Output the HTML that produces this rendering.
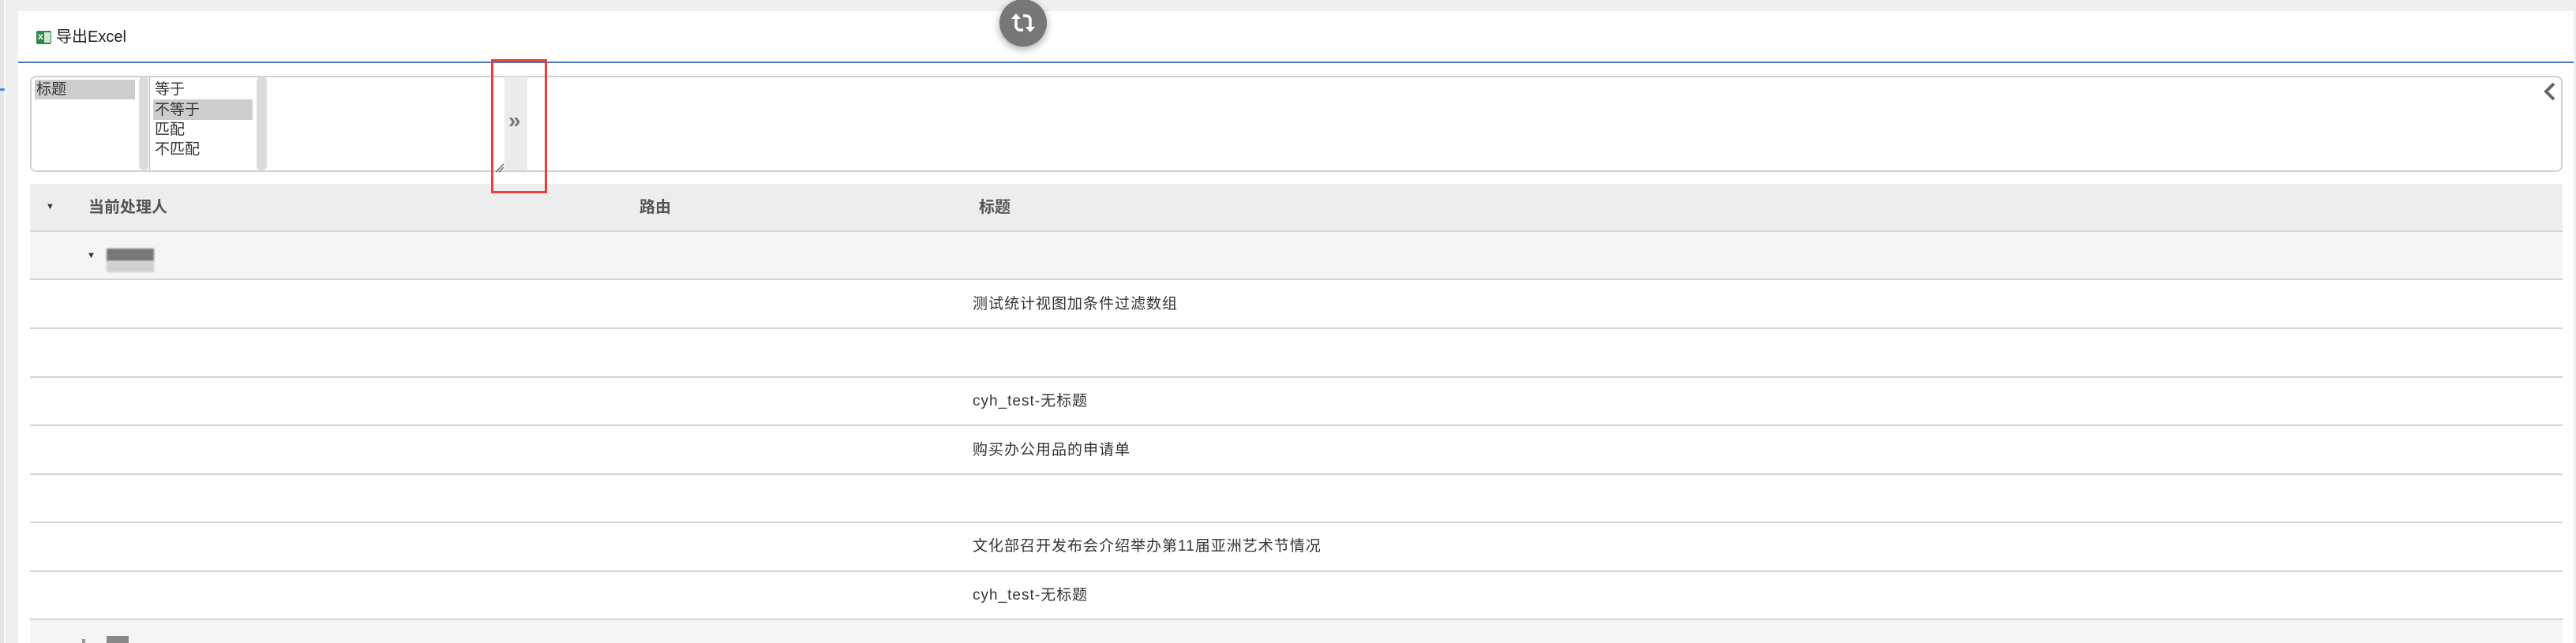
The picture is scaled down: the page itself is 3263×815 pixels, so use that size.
<!DOCTYPE html>
<html><head><meta charset="utf-8"><style>
*{margin:0;padding:0;box-sizing:border-box}
body{width:3263px;height:815px;background:#f0f0f0;position:relative;overflow:hidden;font-family:"Liberation Sans","Noto Sans CJK SC",sans-serif;color:#333}
.a{position:absolute}
.t{font-size:19px;line-height:25px;white-space:nowrap}
.r{font-size:19px;letter-spacing:1px}
.hl{border-top:2px solid #d4d4d4}
</style></head><body>
<div class="a" style="left:0;top:0;width:5px;height:815px;background:#e6e6e6"></div>
<div class="a" style="left:5px;top:0;width:2px;height:815px;background:#fafafa"></div>
<div class="a" style="left:0;top:112px;width:6px;height:3px;background:#4a8ad8"></div>
<div class="a" style="left:23px;top:14px;width:3237px;height:801px;background:#fff"></div>
<div class="a" style="left:46px;top:39px;width:19px;height:17px;background:#2e8b4a;border-radius:2px"></div>
<div class="a" style="left:56px;top:41px;width:8px;height:13px;background:#cfe8d3"></div>
<div class="a" style="left:48px;top:39px;color:#fff;font-size:12px;font-weight:bold">x</div>
<div class="a t" style="left:71px;top:35px;font-size:20px;color:#222">导出Excel</div>
<div class="a" style="left:23px;top:78px;width:3237px;height:2px;background:#4a79b0"></div>
<div class="a" style="left:1266px;top:-1px;width:60px;height:60px;border-radius:50%;background:#777;box-shadow:0 3px 10px rgba(0,0,0,.35)"></div>
<svg class="a" style="left:1278px;top:11px" width="36" height="36" viewBox="0 0 36 36" fill="none" stroke="#fff" stroke-width="3.5">
<path d="M9 12 V22 a5 5 0 0 0 5 5 H18"/><path d="M27 24 V14 a5 5 0 0 0 -5 -5 H18"/>
<path d="M3 13 L9 6 L15 13Z" fill="#fff" stroke="none"/><path d="M21 23 L27 30 L33 23Z" fill="#fff" stroke="none"/></svg>
<div class="a" style="left:38px;top:96px;width:3208px;height:122px;border:2px solid #d0d0d0;border-radius:8px"></div>
<div class="a" style="left:44px;top:101px;width:127px;height:25px;background:#cdcdcd"></div>
<div class="a t" style="left:46px;top:101px">标题</div>
<div class="a" style="left:176px;top:97px;width:12px;height:119px;background:#dcdcdc;border-radius:6px"></div>
<div class="a" style="left:189px;top:97px;width:1px;height:119px;background:#bbb"></div>
<div class="a" style="left:194px;top:126px;width:126px;height:26px;background:#cdcdcd"></div>
<div class="a t" style="left:196px;top:101px">等于</div>
<div class="a t" style="left:196px;top:127px">不等于</div>
<div class="a t" style="left:196px;top:152px">匹配</div>
<div class="a t" style="left:196px;top:177px">不匹配</div>
<div class="a" style="left:325px;top:97px;width:13px;height:119px;background:#dcdcdc;border-radius:6px"></div>
<div class="a" style="left:639px;top:97px;width:29px;height:119px;background:#ececec"></div>
<div class="a" style="left:644px;top:137px;font-size:28px;color:#777;font-weight:bold">»</div>
<svg class="a" style="left:626px;top:205px" width="14" height="14"><path d="M2 13 L12 3 M6 13 L12 7" stroke="#666" stroke-width="1.5"/></svg>
<svg class="a" style="left:3220px;top:103px" width="20" height="26"><path d="M15 3 L5 13 L15 23" stroke="#666" stroke-width="4" fill="none"/></svg>
<div class="a" style="left:38px;top:233px;width:3208px;height:60px;background:#ededed"></div>
<div class="a" style="left:38px;top:292px;width:3208px;height:63px;background:#f5f5f5;border-top:2px solid #d4d4d4;border-bottom:2px solid #d4d4d4"></div>
<div class="a" style="left:58px;top:256px;font-size:11px;color:#333">▼</div>
<div class="a t" style="left:112px;top:251px;font-weight:bold;color:#555;font-size:20px">当前处理人</div>
<div class="a t" style="left:810px;top:251px;font-weight:bold;color:#555;font-size:20px">路由</div>
<div class="a t" style="left:1240px;top:251px;font-weight:bold;color:#555;font-size:20px">标题</div>
<div class="a" style="left:110px;top:318px;font-size:11px">▼</div>
<div class="a" style="left:135px;top:315px;width:60px;height:16px;background:#777;filter:blur(1px)"></div>
<div class="a" style="left:135px;top:331px;width:60px;height:14px;background:#d0d0d0;filter:blur(1px)"></div>
<div class="a hl" style="left:38px;top:415px;width:3208px"></div>
<div class="a hl" style="left:38px;top:477px;width:3208px"></div>
<div class="a hl" style="left:38px;top:538px;width:3208px"></div>
<div class="a hl" style="left:38px;top:600px;width:3208px"></div>
<div class="a hl" style="left:38px;top:661px;width:3208px"></div>
<div class="a hl" style="left:38px;top:723px;width:3208px"></div>
<div class="a" style="left:38px;top:784px;width:3208px;height:31px;background:#f5f5f5;border-top:2px solid #d4d4d4"></div>
<div class="a t r" style="left:1232px;top:373px">测试统计视图加条件过滤数组</div>
<div class="a t r" style="left:1232px;top:496px">cyh_test-无标题</div>
<div class="a t r" style="left:1232px;top:558px">购买办公用品的申请单</div>
<div class="a t r" style="left:1232px;top:680px">文化部召开发布会介绍举办第11届亚洲艺术节情况</div>
<div class="a t r" style="left:1232px;top:742px">cyh_test-无标题</div>
<div class="a" style="left:104px;top:810px;width:4px;height:5px;background:#999"></div>
<div class="a" style="left:135px;top:806px;width:28px;height:9px;background:#888"></div>
<div class="a" style="left:622px;top:75px;width:71px;height:170px;border:3px solid #f03c3c;z-index:5"></div>
</body></html>
